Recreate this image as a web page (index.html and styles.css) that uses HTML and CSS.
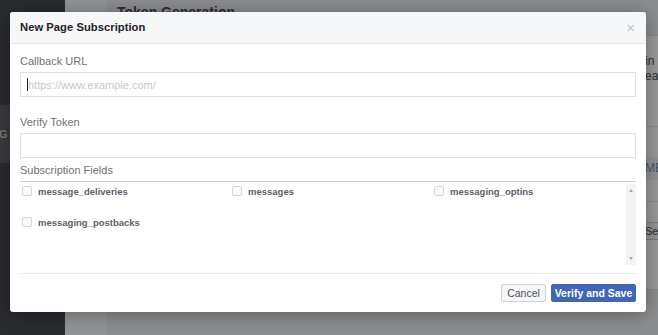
FILE: index.html
```html
<!DOCTYPE html>
<html>
<head>
<meta charset="utf-8">
<link rel="stylesheet" href="styles.css">
</head>
<body>
<div class="page">
  <aside class="sidebar">
    <div class="nav-item">SETTING</div>
  </aside>
  <div class="strip"></div>
  <main class="content">
    <h2 class="section-title">Token Generation</h2>
    <div class="panel">
      <div class="panel-left"></div>
      <div class="panel-right">
        <p class="panel-text">in it<br>ear</p>
        <div class="panel-rule"></div>
        <div class="panel-band">MES</div>
        <div class="panel-rule2"></div>
        <div class="panel-btn">Setup</div>
      </div>
    </div>
  </main>
</div>
<div class="overlay"></div>

<div class="modal">
  <div class="modal-header">
    <span class="modal-title">New Page Subscription</span>
    <span class="close">&#215;</span>
  </div>
  <div class="modal-body">
    <div class="label">Callback URL</div>
    <div class="input"><span class="caret"></span><span class="placeholder">https://www.example.com/</span></div>
    <div class="label gap-lg">Verify Token</div>
    <div class="input"></div>
    <div class="label gap-sm">Subscription Fields</div>
    <div class="fields">
      <div class="fields-grid">
        <label class="field"><span class="box"></span>message_deliveries</label>
        <label class="field"><span class="box"></span>messages</label>
        <label class="field"><span class="box"></span>messaging_optins</label>
        <label class="field"><span class="box"></span>messaging_postbacks</label>
      </div>
      <div class="scrollbar">
        <span class="arrow up"></span>
        <span class="arrow down"></span>
      </div>
    </div>
  </div>
  <div class="modal-footer">
    <button class="btn btn-cancel">Cancel</button>
    <button class="btn btn-primary">Verify and Save</button>
  </div>
</div>
</body>
</html>
```

FILE: styles.css
```css
* { box-sizing: border-box; }
html, body { margin: 0; padding: 0; }
body {
  width: 658px;
  height: 335px;
  overflow: hidden;
  position: relative;
  font-family: "Liberation Sans", Arial, sans-serif;
  background: #e9ebee;
}

/* background page */
.page { display: flex; height: 335px; }
.sidebar { width: 65px; flex: none; background: #484a50; padding-top: 105px; }
.nav-item {
  height: 58px;
  background: #606268;
  color: #c9ccd1;
  font-size: 11px;
  font-weight: bold;
  line-height: 58px;
  text-indent: -40px;
  overflow: hidden;
  white-space: nowrap;
}
.strip { width: 42px; flex: none; background: #f6f7f9; }
.content { flex: 1; padding: 3px 0 0 10px; overflow: hidden; }
.section-title {
  margin: 0;
  font-size: 14px;
  line-height: 18px;
  color: #4b4f56;
}
.panel {
  margin-top: 14px;
  width: 600px;
  height: 255px;
  background: #fff;
  border: 1px solid #dddfe2;
  display: grid;
  grid-template-columns: 527px 1fr;
}
.panel-right { padding-top: 18px; }
.panel-text { margin: 0; font-size: 12px; line-height: 15px; color: #4b4f56; white-space: nowrap; }
.panel-rule { margin-top: 42px; border-top: 1px solid #e5e5e5; }
.panel-band {
  margin-top: 30px;
  height: 23px;
  background: #f1f3f8;
  color: #7f8fb0;
  font-size: 12px;
  line-height: 23px;
}
.panel-rule2 { margin-top: 21px; border-top: 1px solid #e5e5e5; height: 22px; }
.panel-btn {
  margin-left: -10px;
  height: 18px;
  width: 60px;
  border: 1px solid #ccd0d5;
  background: #f6f7f9;
  color: #4b4f56;
  font-size: 11px;
  line-height: 16px;
  padding-left: 9px;
  margin-top: -1px;
}

.overlay { position: absolute; inset: 0; background: rgba(0, 0, 0, 0.4); }

/* modal */
.modal {
  position: absolute;
  left: 10px;
  top: 12px;
  width: 636px;
  height: 300px;
  background: #fff;
  border-radius: 3px;
  box-shadow: 0 2px 20px rgba(0, 0, 0, 0.35);
  display: flex;
  flex-direction: column;
}
.modal-header {
  height: 32px;
  flex: none;
  background: #f6f7f9;
  border-bottom: 1px solid #e5e5e5;
  border-radius: 3px 3px 0 0;
  display: flex;
  align-items: center;
  justify-content: space-between;
  padding: 0 10px 1px 10px;
}
.modal-title { font-size: 11.2px; font-weight: bold; color: #1d2129; letter-spacing: 0.05px; }
.close { font-size: 15px; line-height: 15px; color: #bec2c9; margin-right: 1px; }

.modal-body { flex: 1; padding: 10px 10px 0 10px; display: flex; flex-direction: column; }
.label { font-size: 11px; line-height: 14px; color: #6f7277; margin-bottom: 4px; }
.gap-lg { margin-top: 18px; }
.gap-sm { margin-top: 5px; }
.input {
  height: 25px;
  border: 1px solid #dddfe2;
  display: flex;
  align-items: center;
  padding-left: 6px;
}
.caret { width: 1px; height: 13px; background: #1d2129; }
.placeholder { font-size: 11px; color: #c5c8cc; }

.fields {
  height: 85px;
  border-top: 1px solid #c9ccd1;
  display: flex;
}
.fields-grid {
  flex: 1;
  display: grid;
  grid-template-columns: 210px 202px 1fr;
  grid-auto-rows: 14px;
  row-gap: 17px;
  padding: 2px 0 0 2px;
  align-content: start;
}
.field {
  display: flex;
  align-items: center;
  font-size: 9.5px;
  font-weight: bold;
  color: #5d6067;
  white-space: nowrap;
}
.box {
  width: 10px;
  height: 10px;
  border: 1px solid #d4d6da;
  border-radius: 2px;
  background: #fafafa;
  margin-right: 6px;
  flex: none;
}
.scrollbar {
  width: 10px;
  margin: 2px 0 1px 0;
  background: #f3f3f3;
  display: flex;
  flex-direction: column;
  justify-content: space-between;
  align-items: center;
  padding: 5px 0;
}
.arrow { width: 0; height: 0; border-left: 2.5px solid transparent; border-right: 2.5px solid transparent; }
.arrow.up { border-bottom: 3px solid #a3a3a3; }
.arrow.down { border-top: 3px solid #a3a3a3; }

.modal-footer {
  flex: none;
  margin: 0 10px;
  border-top: 1px solid #e9ebee;
  padding: 10px 0;
  display: flex;
  justify-content: flex-end;
  gap: 5px;
}
.btn {
  height: 18px;
  margin: 0;
  border-radius: 2px;
  font-family: "Liberation Sans", Arial, sans-serif;
  font-size: 10.5px;
  line-height: 16px;
  padding: 0;
  cursor: pointer;
}
.btn-cancel {
  width: 45px;
  background: #f6f7f9;
  border: 1px solid #ced0d4;
  color: #4b4f56;
}
.btn-primary {
  width: 85px;
  background: #4267b2;
  border: 1px solid #4267b2;
  color: #fff;
  font-weight: bold;
}
```
